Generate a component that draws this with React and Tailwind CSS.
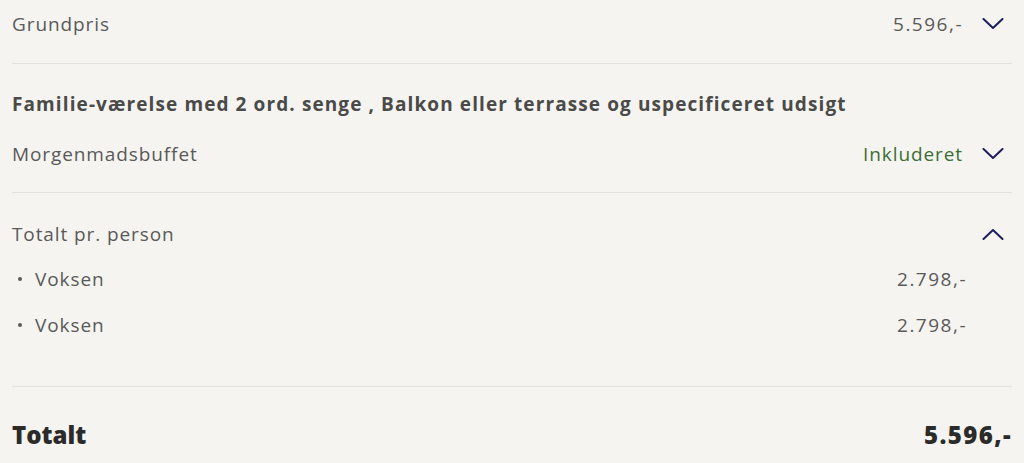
import React from "react";

const font = { fontFamily: "'Open Sans', Lato, sans-serif" };

function Chevron({ up = false }) {
  return (
    <svg width="22" height="12" viewBox="0 0 22 12" className="shrink-0">
      <path
        d={up ? "M1.5 11 L11 2 L20.5 11" : "M1.5 1 L11 10 L20.5 1"}
        fill="none"
        stroke="#1f1d5c"
        strokeWidth="2"
        strokeLinecap="round"
        strokeLinejoin="round"
      />
    </svg>
  );
}

function Line({ label, value, valueClass = "text-[#5a5a58] tracking-[1.5px]", chevron, up }) {
  return (
    <div className="flex h-8 items-center text-[19px] tracking-[0.9px] text-[#5a5a58]">
      <span className="flex-1">{label}</span>
      {value && <span className={valueClass}>{value}</span>}
      <span className="ml-[19px] mr-2 flex w-[22px] justify-center">
        {chevron && <Chevron up={up} />}
      </span>
    </div>
  );
}

function Person({ price }) {
  return (
    <div className="flex h-8 items-center text-[19px] tracking-[0.9px] text-[#5a5a58]">
      <span className="ml-[6px] mr-[13px] h-[4px] w-[4px] rounded-full bg-[#5a5a58]" />
      <span className="flex-1">Voksen</span>
      <span className="mr-[45px] tracking-[1.5px]">{price}</span>
    </div>
  );
}

export default function App() {
  return (
    <div className="min-h-[463px] w-full bg-[#f5f4f1] px-3" style={font}>
      <div className="border-b border-[#e4e2de] pb-[23px] pt-2">
        <Line label="Grundpris" value="5.596,-" chevron />
      </div>

      <div className="border-b border-[#e4e2de] pb-[22px] pt-[26px]">
        <div className="flex h-7 items-center text-[19px] font-bold tracking-[1.1px] text-[#4a4a48]">
          Familie-værelse med 2 ord. senge , Balkon eller terrasse og uspecificeret udsigt
        </div>
        <div className="mt-5">
          <Line
            label="Morgenmadsbuffet"
            value="Inkluderet"
            valueClass="text-[#3c6e34] tracking-[0.9px]"
            chevron
          />
        </div>
      </div>

      <div className="border-b border-[#e4e2de] pb-[45px] pt-[25px]">
        <Line label="Totalt pr. person" chevron up />
        <div className="mt-[13px] flex flex-col gap-[14px]">
          <Person price="2.798,-" />
          <Person price="2.798,-" />
        </div>
      </div>

      <div className="mt-[30px] flex h-9 items-center text-[24px] font-extrabold text-[#2b2b2a]">
        <span className="flex-1">Totalt</span>
        <span className="tracking-[1.4px]">5.596,-</span>
      </div>
    </div>
  );
}
